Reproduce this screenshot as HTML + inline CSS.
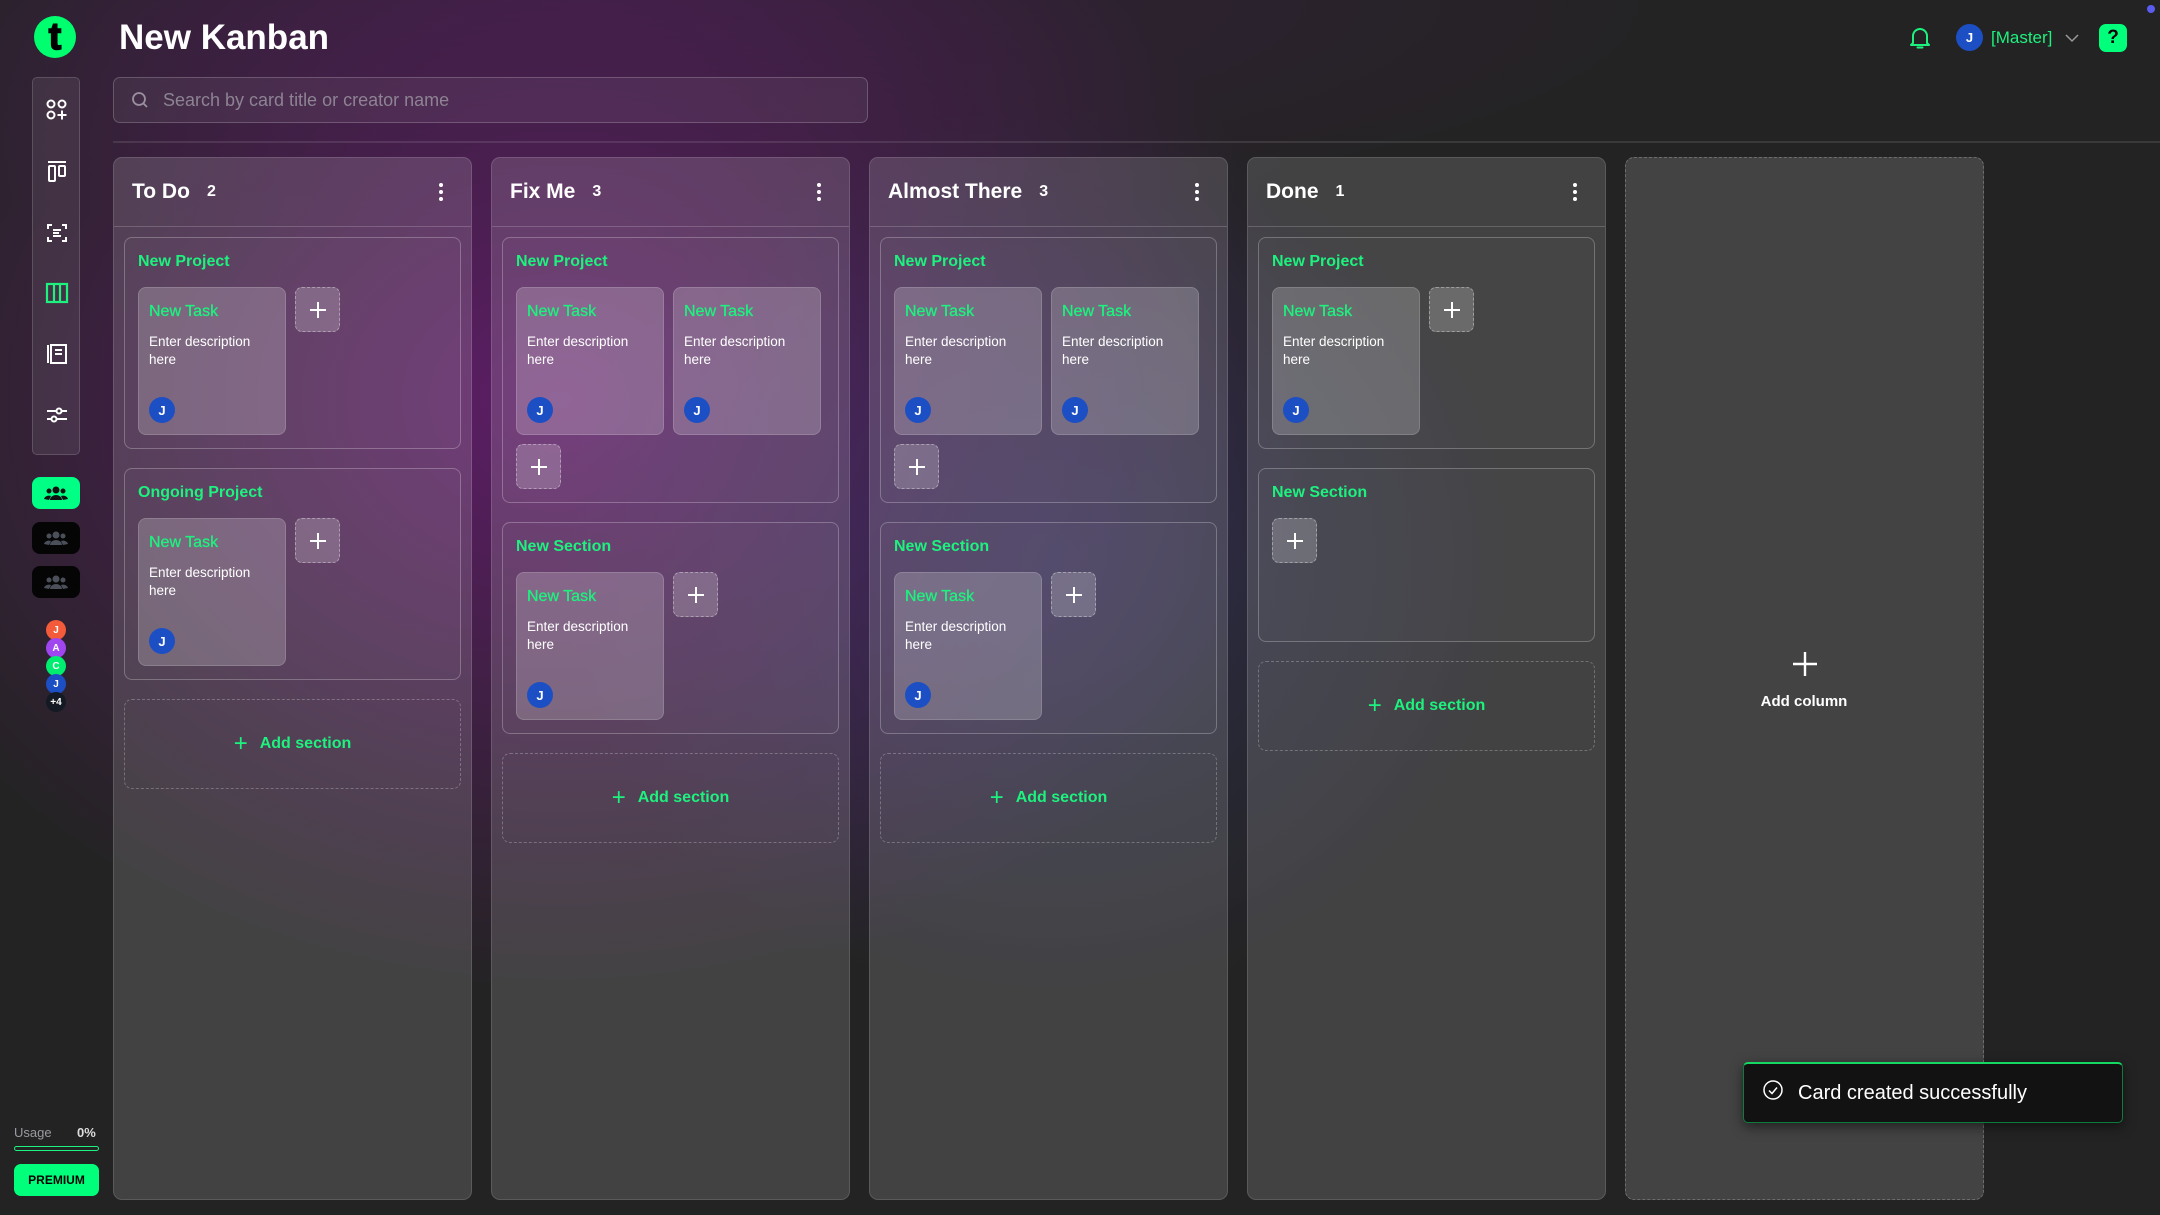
<!DOCTYPE html>
<html><head><meta charset="utf-8"><style>
*{box-sizing:border-box;margin:0;padding:0}
body{width:2160px;height:1215px;overflow:hidden;font-family:"Liberation Sans",sans-serif;color:#fff;
background:
radial-gradient(ellipse 700px 650px at 1050px 560px, rgba(55,55,110,0.5), transparent 70%),
radial-gradient(ellipse 1000px 800px at 560px 400px, rgba(100,28,110,0.9), transparent 75%),
radial-gradient(ellipse 1400px 300px at 600px 0px, rgba(70,30,80,0.5), transparent 80%),
#232323;position:relative}
.abs{position:absolute}
.green{color:#1df27f}
.col{position:absolute;top:157px;width:359px;height:1043px;border-radius:9px;background:rgba(255,255,255,0.14);border:1px solid rgba(255,255,255,0.13)}
.hdr{height:69px;border-bottom:1.5px solid rgba(255,255,255,0.18);display:flex;align-items:center;padding:0 18px}
.hdr b{font-size:21px}
.hdr span{font-size:16px;font-weight:bold;margin-left:17px}
.dots{margin-left:auto;width:4px;display:flex;flex-direction:column;gap:3px;margin-right:10px}
.dots i{width:4px;height:4px;background:#fff;border-radius:50%;display:block}
.body{padding:10px}
.sec{border:1.5px solid rgba(255,255,255,0.25);border-radius:8px;padding:13px 13px 13px;margin-bottom:19px;background:rgba(255,255,255,0.02)}
.st{font-size:16px;font-weight:bold;color:#1df27f;line-height:22px;margin-bottom:14px}
.cards{display:flex;flex-wrap:wrap;gap:9px}
.card{width:148px;height:148px;border-radius:8px;background:rgba(255,255,255,0.2);border:1px solid rgba(255,255,255,0.15);padding:13px 10px;position:relative}
.card .t{font-size:16px;color:#1df27f;line-height:22px;margin-bottom:10px;-webkit-text-stroke:0.3px #1df27f}
.card .d{font-size:13.5px;line-height:18px}
.av{width:26px;height:26px;border-radius:50%;background:#1c4fc4;font-size:13px;font-weight:bold;display:flex;align-items:center;justify-content:center;color:#fff}
.card .av{position:absolute;left:10px;bottom:11px}
.plus{width:45px;height:45px;border-radius:7px;border:1.5px dashed rgba(255,255,255,0.35);background:rgba(255,255,255,0.2);display:flex;align-items:center;justify-content:center}
.addsec{height:90px;border:1.5px dashed rgba(255,255,255,0.25);border-radius:8px;display:flex;align-items:center;justify-content:center;font-size:16px;font-weight:bold;color:#1df27f;gap:12px}
.nav{position:absolute;left:32px;top:77px;width:48px;height:378px;border:1.5px solid rgba(255,255,255,0.15);border-radius:5px;background:rgba(255,255,255,0.08)}
.nav svg{position:absolute;left:12px}
.team{position:absolute;left:32px;width:48px;height:32px;border-radius:8px;display:flex;align-items:center;justify-content:center}
.sav{position:absolute;left:46px;width:20px;height:20px;border-radius:50%;font-size:10px;font-weight:bold;display:flex;align-items:center;justify-content:center}
</style></head><body>
<div class="abs" style="left:34px;top:16px;width:42px;height:42px;border-radius:50%;background:#00ff6e;display:flex;align-items:center;justify-content:center;font-size:38px;font-weight:bold;color:#000;line-height:1;-webkit-text-stroke:1.5px #000">t</div>
<div class="abs" style="left:119px;top:18px;font-size:35px;font-weight:bold">New Kanban</div>
<div class="abs" style="left:113px;top:77px;width:755px;height:46px;border:1.5px solid rgba(255,255,255,0.2);border-radius:7px;background:rgba(255,255,255,0.06)"></div>
<svg class="abs" style="left:131px;top:91px" width="18" height="18" viewBox="0 0 18 18"><circle cx="8" cy="8" r="6" fill="none" stroke="#9a90a0" stroke-width="1.8"/><path d="M12.5 12.5 16 16" stroke="#9a90a0" stroke-width="1.8"/></svg>
<div class="abs" style="left:163px;top:90px;font-size:18px;color:#8d8393">Search by card title or creator name</div>
<div class="abs" style="left:113px;top:141px;width:2047px;height:2px;background:rgba(255,255,255,0.1)"></div>
<svg class="abs" style="left:1908px;top:25px" width="24" height="26" viewBox="0 0 24 26"><path d="M5 18V11a7 7 0 0 1 14 0v7l2 2H3z" fill="none" stroke="#1df27f" stroke-width="2" stroke-linejoin="round"/><path d="M9.5 22.5h5" stroke="#1df27f" stroke-width="2" stroke-linecap="round"/></svg>
<div class="abs av" style="left:1956px;top:24px;width:27px;height:27px">J</div>
<div class="abs green" style="left:1991px;top:28px;font-size:17px">[Master]</div>
<svg class="abs" style="left:2065px;top:34px" width="14" height="9" viewBox="0 0 14 9"><path d="M1 1l6 6 6-6" fill="none" stroke="#999" stroke-width="1.5"/></svg>
<div class="abs" style="left:2099px;top:24px;width:28px;height:28px;border-radius:7px;background:#00ff7a;color:#000;font-weight:bold;font-size:19px;display:flex;align-items:center;justify-content:center">?</div>
<div class="abs" style="left:2147px;top:5px;width:8px;height:8px;border-radius:50%;background:#5a5cf0"></div>
<div class="nav">
<svg style="top:20px" width="24" height="24" viewBox="0 0 24 24" fill="none" stroke="#fff" stroke-width="2"><circle cx="6" cy="6" r="3.5"/><circle cx="17" cy="6" r="3.5"/><circle cx="6" cy="17" r="3.5"/><path d="M17 12.5v9M12.5 17h9"/></svg>
<svg style="top:82px" width="24" height="24" viewBox="0 0 24 24" fill="none" stroke="#fff" stroke-width="2"><path d="M3 2h18"/><rect x="4" y="6" width="6" height="15" rx="1"/><rect x="14" y="6" width="6" height="10" rx="1"/></svg>
<svg style="top:143px" width="24" height="24" viewBox="0 0 24 24" fill="none" stroke="#fff" stroke-width="2"><path d="M3 8V4h4M17 4h4v4M21 16v4h-4M7 20H3v-4M8 9h8M8 12h6M8 15h8"/></svg>
<svg style="top:203px" width="24" height="24" viewBox="0 0 24 24" fill="none" stroke="#1df27f" stroke-width="2.2"><rect x="2" y="3" width="20" height="18"/><path d="M9 3v18M15 3v18"/></svg>
<svg style="top:264px" width="24" height="24" viewBox="0 0 24 24" fill="none" stroke="#fff" stroke-width="2"><path d="M3 3v18"/><rect x="6" y="3" width="15" height="18"/><path d="M10 8h7M10 12h7"/></svg>
<svg style="top:325px" width="24" height="24" viewBox="0 0 24 24" fill="none" stroke="#fff" stroke-width="2"><path d="M2 8h20M2 16h20"/><circle cx="14" cy="8" r="2.5" fill="#3a2e3e"/><circle cx="9" cy="16" r="2.5" fill="#3a2e3e"/></svg>
</div>
<div class="team" style="top:477px;background:#00ff85"><svg width="24" height="14" viewBox="0 0 24 14" fill="#111"><circle cx="12" cy="4" r="3.5"/><circle cx="5" cy="5" r="2.5"/><circle cx="19" cy="5" r="2.5"/><path d="M6 14a6 5 0 0 1 12 0zM0 13a5 4 0 0 1 7-3l-2 4zM24 13a5 4 0 0 0-7-3l2 4z"/></svg></div>
<div class="team" style="top:522px;background:#050505"><svg width="24" height="14" viewBox="0 0 24 14" fill="#4a4f5a"><circle cx="12" cy="4" r="3.5"/><circle cx="5" cy="5" r="2.5"/><circle cx="19" cy="5" r="2.5"/><path d="M6 14a6 5 0 0 1 12 0zM0 13a5 4 0 0 1 7-3l-2 4zM24 13a5 4 0 0 0-7-3l2 4z"/></svg></div>
<div class="team" style="top:566px;background:#050505"><svg width="24" height="14" viewBox="0 0 24 14" fill="#4a4f5a"><circle cx="12" cy="4" r="3.5"/><circle cx="5" cy="5" r="2.5"/><circle cx="19" cy="5" r="2.5"/><path d="M6 14a6 5 0 0 1 12 0zM0 13a5 4 0 0 1 7-3l-2 4zM24 13a5 4 0 0 0-7-3l2 4z"/></svg></div>
<div class="sav" style="top:620px;background:#f45b3a">J</div>
<div class="sav" style="top:638px;background:#a046f0">A</div>
<div class="sav" style="top:656px;background:#00ee70">C</div>
<div class="sav" style="top:674px;background:#1c4fc4">J</div>
<div class="sav" style="top:692px;background:#141a24">+4</div>
<div class="abs" style="left:14px;top:1125px;font-size:13px;color:#9a9aa0">Usage</div>
<div class="abs" style="left:77px;top:1125px;font-size:13px;font-weight:bold;color:#ddd">0%</div>
<div class="abs" style="left:14px;top:1146px;width:85px;height:5px;border:1.5px solid #1df27f;border-radius:3px"></div>
<div class="abs" style="left:14px;top:1164px;width:85px;height:32px;border-radius:7px;background:#00ff7a;color:#000;font-size:12px;font-weight:bold;display:flex;align-items:center;justify-content:center">PREMIUM</div>

<div class="col" style="left:113px">
<div class="hdr"><b>To Do</b><span>2</span><div class="dots"><i></i><i></i><i></i></div></div>
<div class="body">
<div class="sec"><div class="st">New Project</div><div class="cards">
<div class="card"><div class="t">New Task</div><div class="d">Enter description<br>here</div><div class="av">J</div></div>
<div class="plus"><svg width="18" height="18"><path d="M9 1v16M1 9h16" stroke="#fff" stroke-width="2"/></svg></div></div></div>
<div class="sec"><div class="st">Ongoing Project</div><div class="cards">
<div class="card"><div class="t">New Task</div><div class="d">Enter description<br>here</div><div class="av">J</div></div>
<div class="plus"><svg width="18" height="18"><path d="M9 1v16M1 9h16" stroke="#fff" stroke-width="2"/></svg></div></div></div>
<div class="addsec"><span style="font-size:24px;font-weight:normal">+</span>Add section</div>
</div></div>

<div class="col" style="left:491px">
<div class="hdr"><b>Fix Me</b><span>3</span><div class="dots"><i></i><i></i><i></i></div></div>
<div class="body">
<div class="sec"><div class="st">New Project</div><div class="cards">
<div class="card"><div class="t">New Task</div><div class="d">Enter description<br>here</div><div class="av">J</div></div>
<div class="card"><div class="t">New Task</div><div class="d">Enter description<br>here</div><div class="av">J</div></div>
<div class="plus"><svg width="18" height="18"><path d="M9 1v16M1 9h16" stroke="#fff" stroke-width="2"/></svg></div></div></div>
<div class="sec"><div class="st">New Section</div><div class="cards">
<div class="card"><div class="t">New Task</div><div class="d">Enter description<br>here</div><div class="av">J</div></div>
<div class="plus"><svg width="18" height="18"><path d="M9 1v16M1 9h16" stroke="#fff" stroke-width="2"/></svg></div></div></div>
<div class="addsec"><span style="font-size:24px;font-weight:normal">+</span>Add section</div>
</div></div>

<div class="col" style="left:869px">
<div class="hdr"><b>Almost There</b><span>3</span><div class="dots"><i></i><i></i><i></i></div></div>
<div class="body">
<div class="sec"><div class="st">New Project</div><div class="cards">
<div class="card"><div class="t">New Task</div><div class="d">Enter description<br>here</div><div class="av">J</div></div>
<div class="card"><div class="t">New Task</div><div class="d">Enter description<br>here</div><div class="av">J</div></div>
<div class="plus"><svg width="18" height="18"><path d="M9 1v16M1 9h16" stroke="#fff" stroke-width="2"/></svg></div></div></div>
<div class="sec"><div class="st">New Section</div><div class="cards">
<div class="card"><div class="t">New Task</div><div class="d">Enter description<br>here</div><div class="av">J</div></div>
<div class="plus"><svg width="18" height="18"><path d="M9 1v16M1 9h16" stroke="#fff" stroke-width="2"/></svg></div></div></div>
<div class="addsec"><span style="font-size:24px;font-weight:normal">+</span>Add section</div>
</div></div>

<div class="col" style="left:1247px">
<div class="hdr"><b>Done</b><span>1</span><div class="dots"><i></i><i></i><i></i></div></div>
<div class="body">
<div class="sec"><div class="st">New Project</div><div class="cards">
<div class="card"><div class="t">New Task</div><div class="d">Enter description<br>here</div><div class="av">J</div></div>
<div class="plus"><svg width="18" height="18"><path d="M9 1v16M1 9h16" stroke="#fff" stroke-width="2"/></svg></div></div></div>
<div class="sec" style="height:174px"><div class="st">New Section</div><div class="cards">
<div class="plus"><svg width="18" height="18"><path d="M9 1v16M1 9h16" stroke="#fff" stroke-width="2"/></svg></div></div></div>
<div class="addsec"><span style="font-size:24px;font-weight:normal">+</span>Add section</div>
</div></div>

<div class="col" style="left:1625px;border:1.5px dashed rgba(255,255,255,0.22);background:rgba(255,255,255,0.15)">
<svg class="abs" style="left:166px;top:493px" width="26" height="26"><path d="M13 1v24M1 13h24" stroke="#fff" stroke-width="2.4"/></svg>
<div class="abs" style="left:0;width:356px;top:535px;text-align:center;font-size:15px;font-weight:bold">Add column</div>
</div>

<div class="abs" style="left:1743px;top:1062px;width:380px;height:61px;background:#121212;border:1.5px solid #0f7a3e;border-top:2px solid #14d862;border-radius:5px;box-shadow:0 4px 12px rgba(0,0,0,0.5)">
<svg class="abs" style="left:18px;top:15px" width="22" height="22" viewBox="0 0 22 22"><circle cx="11" cy="11" r="9" fill="none" stroke="#fff" stroke-width="1.5"/><path d="M7 11.5l3 3 5-6" fill="none" stroke="#fff" stroke-width="1.5"/></svg>
<div class="abs" style="left:54px;top:18px;font-size:20px">Card created successfully</div>
</div>
</body></html>
